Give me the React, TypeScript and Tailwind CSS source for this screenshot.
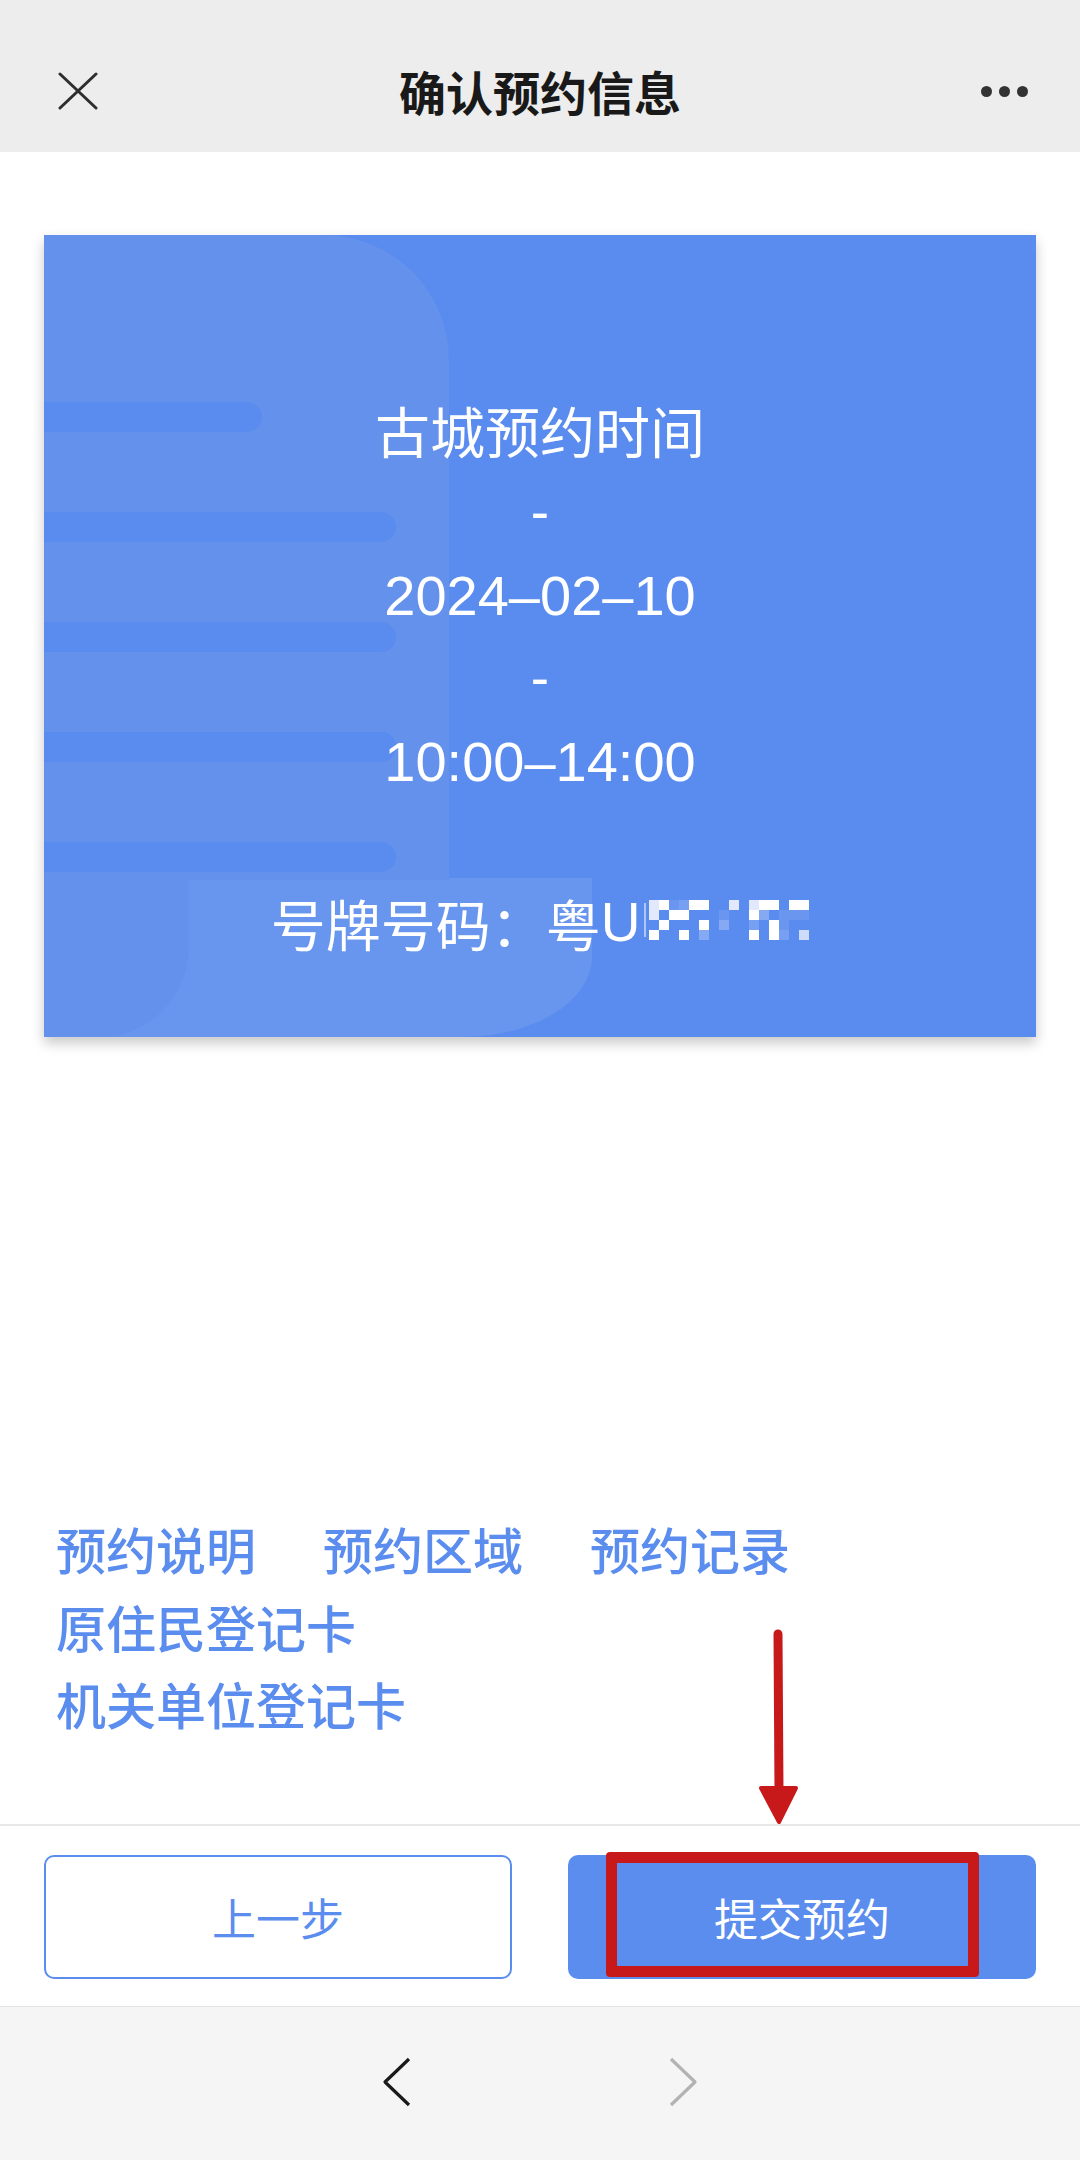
import React from "react";

const MOSAIC = [
  "AWSNWWBBABAWWBWW",
  "ABWWBBBSBBWMBSSS",
  "BWBBBWBMBBNBWSBB",
  "WBBWBMBBBBWBWNBL",
];

const CELL: Record<string, string> = {
  W: "bg-white",
  A: "bg-[#e2e9fc]",
  M: "bg-[#86a9f3]",
  N: "bg-[#78a0f2]",
  S: "bg-[#6b96f0]",
  L: "bg-[#cfdcf9]",
  B: "",
};

function CardDecor() {
  return (
    <svg className="absolute inset-0" width="992" height="802" viewBox="0 0 992 802">
      <path d="M0 643 H548 V722 A130 80 0 0 1 418 802 H0 Z" fill="#6896ee" />
      <path d="M0 643 H145 V712 A90 90 0 0 1 55 802 H0 Z" fill="#6391ec" />
      <path d="M0 0 H280 A125 125 0 0 1 405 125 V645 H0 Z" fill="#6391ec" />
      <path d="M-10 167 H203 A15 15 0 0 1 203 197 H-10 Z" fill="#5a8bee" />
      <path d="M-10 277 H337 A15 15 0 0 1 337 307 H-10 Z" fill="#5a8bee" />
      <path d="M-10 387 H337 A15 15 0 0 1 337 417 H-10 Z" fill="#5a8bee" />
      <path d="M-10 497 H337 A15 15 0 0 1 337 527 H-10 Z" fill="#5a8bee" />
      <path d="M-10 607 H337 A15 15 0 0 1 337 637 H-10 Z" fill="#5a8bee" />
    </svg>
  );
}

export default function App() {
  return (
    <div className="relative w-[1080px] h-[2160px] overflow-hidden bg-white flex flex-col font-[family-name:'Noto_Sans_CJK_SC',sans-serif]">
      {/* Header */}
      <div className="h-[152px] shrink-0 bg-[#ededed] pt-[30px] grid grid-cols-[1fr_auto_1fr] items-center">
        <div className="pl-[58px] flex items-center">
          <svg width="40" height="38" viewBox="0 0 40 38">
            <path d="M2 2 L38 36 M38 2 L2 36" stroke="#2e2e2e" strokeWidth="3" strokeLinecap="round" />
          </svg>
        </div>
        <div className="text-[47px] leading-[60px] font-semibold text-[#191919]">确认预约信息</div>
        <div className="pr-[52px] flex items-center justify-end gap-[7px]">
          <span className="w-[11px] h-[11px] rounded-full bg-[#333]" />
          <span className="w-[11px] h-[11px] rounded-full bg-[#333]" />
          <span className="w-[11px] h-[11px] rounded-full bg-[#333]" />
        </div>
      </div>

      {/* Main */}
      <div className="flex-1 px-[44px] pt-[83px]">
        <div className="relative h-[802px] overflow-hidden bg-[#5a8bee] shadow-[0_6px_12px_rgba(0,0,0,0.22)]">
          <CardDecor />
          <div className="relative flex flex-col items-center pt-[153px] text-white font-[family-name:'Liberation_Sans','Noto_Sans_CJK_SC',sans-serif]">
            <div className="text-[55px] leading-[83px] font-[family-name:'Noto_Sans_CJK_SC',sans-serif]">古城预约时间</div>
            <div className="text-[55px] leading-[83px]">-</div>
            <div className="text-[56px] leading-[83px]">2024–02–10</div>
            <div className="text-[55px] leading-[83px]">-</div>
            <div className="text-[56px] leading-[83px]">10:00–14:00</div>
            <div className="mt-[78px] flex items-center text-[55px] leading-[83px]">
              <span className="font-[family-name:'Noto_Sans_CJK_SC',sans-serif]">号牌号码：粤</span>
              <span>U</span>
              <span className="ml-[4px] mb-[6px] w-[2px] h-[34px] bg-white/50" />
              <span className="ml-[3px] mb-[6px] grid grid-cols-[repeat(16,10px)] grid-rows-[repeat(4,10px)]">
                {MOSAIC.flatMap((row, r) =>
                  row.split("").map((c, i) => <span key={`${r}-${i}`} className={CELL[c]} />)
                )}
              </span>
            </div>
          </div>
        </div>

        <div className="mt-[473px] pl-[12px] text-[50px] leading-[77.5px] font-medium text-[#5b8def]">
          <div className="flex gap-x-[67px]">
            <span>预约说明</span>
            <span>预约区域</span>
            <span>预约记录</span>
          </div>
          <div>原住民登记卡</div>
          <div>机关单位登记卡</div>
        </div>
      </div>

      {/* Footer buttons */}
      <div className="shrink-0 border-t-2 border-[#e8e8e8] px-[44px] pt-[29px] pb-[27px] flex gap-[56px]">
        <div className="w-[468px] h-[124px] rounded-[10px] border-2 border-[#5b8def] flex items-center justify-center text-[44px] text-[#5b8def]">
          上一步
        </div>
        <div className="w-[468px] h-[124px] rounded-[10px] bg-[#5b8def] flex items-center justify-center text-[44px] text-white">
          提交预约
        </div>
      </div>

      {/* Bottom nav */}
      <div className="h-[154px] shrink-0 border-t border-[#e3e3e3] bg-[#f5f5f5] flex items-center justify-center gap-[256px] pb-[4px]">
        <svg width="30" height="50" viewBox="0 0 30 50">
          <path d="M27 2 L3 25 L27 48" fill="none" stroke="#1a1a1a" strokeWidth="3.2" strokeLinejoin="round" />
        </svg>
        <svg width="30" height="50" viewBox="0 0 30 50">
          <path d="M3 2 L27 25 L3 48" fill="none" stroke="#b3b3b3" strokeWidth="3.2" strokeLinejoin="round" />
        </svg>
      </div>

      {/* Red annotation overlay */}
      <div className="absolute left-[606px] top-[1852px] w-[373px] h-[125px] border-[11px] border-[#c8191a] rounded-[4px]" />
      <svg className="absolute left-[758px] top-[1628px]" width="40" height="200" viewBox="0 0 40 200">
        <path d="M20 6 L21 164" stroke="#c8191a" strokeWidth="9" strokeLinecap="round" />
        <path d="M3 160 L38 160 L21 194 Z" fill="#c8191a" stroke="#c8191a" strokeWidth="4" strokeLinejoin="round" />
      </svg>
    </div>
  );
}
